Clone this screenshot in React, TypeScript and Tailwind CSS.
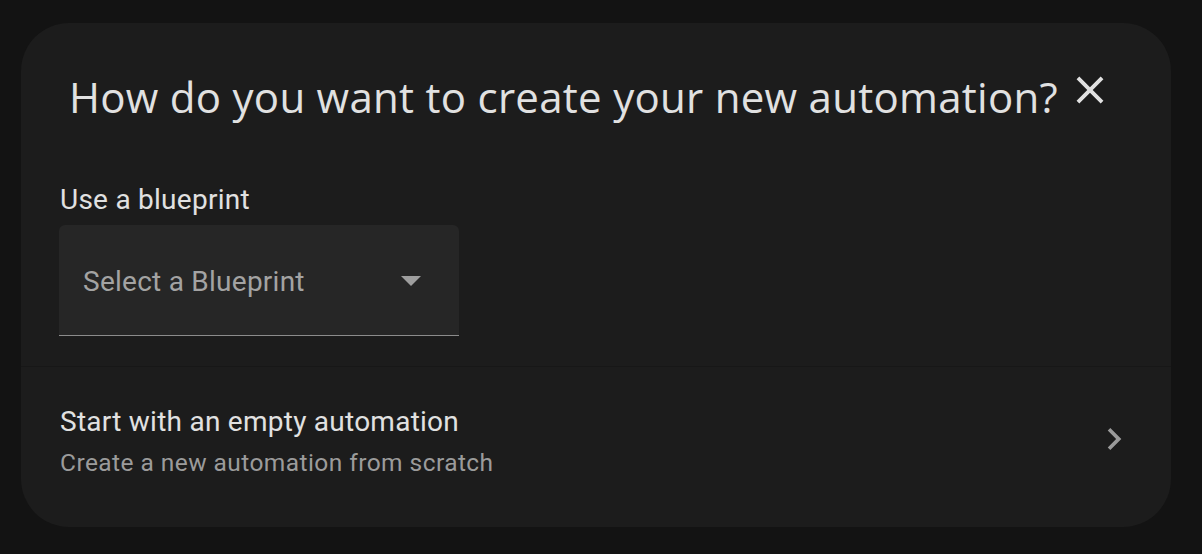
import React from 'react';

const roboto = { fontFamily: 'Roboto, "Liberation Sans", sans-serif' };

export default function App() {
  return (
    <div className="w-[1202px] h-[554px] bg-[#131313] pt-[23px] pl-[21px]">
      <div className="w-[1150px] h-[504px] bg-[#1c1c1c] rounded-[48px] flex flex-col overflow-hidden">
        {/* header */}
        <div className="flex items-start pt-[46px] pl-[48px] pr-[20px]">
          <h1 className="text-[42px] leading-[56px] tracking-[0.28px] text-[#e1e1e1] font-['Open_Sans',sans-serif]">
            How do you want to create your new automation?
          </h1>
          <button className="ml-[9px] mt-[-2px] w-[46px] h-[46px] text-[#e1e1e1]">
            <svg viewBox="0 0 24 24" width="46" height="46" fill="currentColor">
              <path d="M19,6.41L17.59,5L12,10.59L6.41,5L5,6.41L10.59,12L5,17.59L6.41,19L12,13.41L17.59,19L19,17.59L13.41,12L19,6.41Z" />
            </svg>
          </button>
        </div>

        {/* blueprint picker */}
        <div className="pl-[38px] pt-[57px] pb-[30px] border-b border-[#171717]" style={roboto}>
          <div className="pl-[1px] text-[28px] leading-[36px] tracking-[0.009em] text-[#e1e1e1]">Use a blueprint</div>
          <div className="mt-[7px] w-[400px] h-[111px] bg-[#262626] rounded-t-[6px] border-b border-[#8c8c8c] flex items-center pl-[24px] pr-[38px] pt-[4px]">
            <span className="flex-1 text-[28px] leading-[36px] tracking-[0.009em] text-[#a3a3a3]">Select a Blueprint</span>
            <svg width="20" height="10" viewBox="0 0 20 10" className="mt-[-2px]">
              <path d="M0 0 L20 0 L10 10 Z" fill="#9e9e9e" />
            </svg>
          </div>
        </div>

        {/* empty automation */}
        <div className="flex items-center pl-[39px] pr-[35px] pt-[37px]" style={roboto}>
          <div className="flex-1 flex flex-col">
            <span className="text-[28px] leading-[36px] tracking-[0.009em] text-[#e1e1e1]">Start with an empty automation</span>
            <span className="mt-[7px] text-[24.5px] leading-[32px] tracking-[0.0178em] text-[#9b9b9b]">
              Create a new automation from scratch
            </span>
          </div>
          <svg viewBox="0 0 24 24" width="44" height="44" fill="#9a9a9a" className="mt-[-5px]">
            <path d="M8.59,16.58L13.17,12L8.59,7.41L10,6L16,12L10,18L8.59,16.58Z" />
          </svg>
        </div>
      </div>
    </div>
  );
}
